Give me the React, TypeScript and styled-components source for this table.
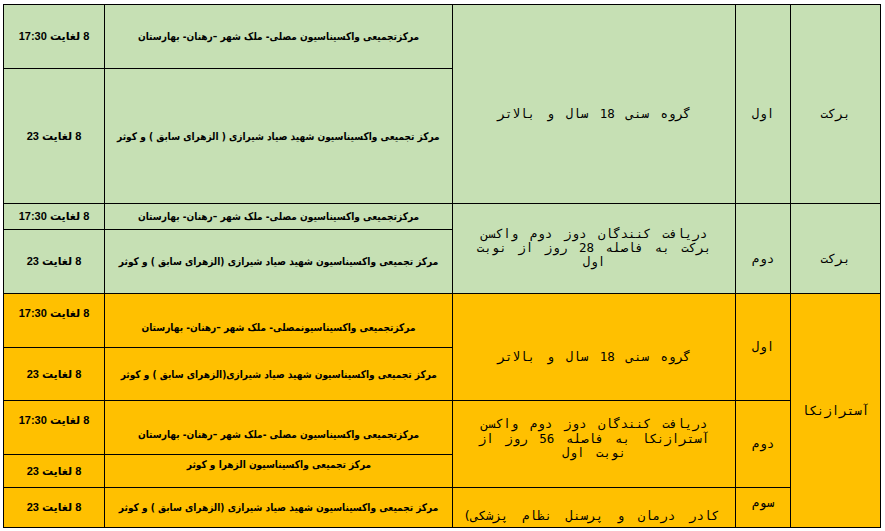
import React from "react";
import styled, { createGlobalStyle } from "styled-components";

const Global = createGlobalStyle`
  html, body { margin: 0; padding: 0; background: #fff; }
  body { font-family: "DejaVu Sans", sans-serif; }
`;

const GREEN = "#C6E0B4";
const YELLOW = "#FFC000";

const Table = styled.div`
  display: grid;
  grid-template-columns: 100px 347px 282px 54px 89px;
  grid-template-rows: 63px 134px 25px 63px 53px 52px 53px 32px 39px;
  gap: 1px;
  padding: 1px;
  background: #000;
  margin: 4px 0 0 3px;
  width: max-content;
  direction: ltr;
`;

type V = "start" | "center" | "end";

const Cell = styled.div<{
  $col: number;
  $row: number;
  $span?: number;
  $bg: string;
  $v?: V;
  $pad?: string;
}>`
  grid-column: ${(p) => p.$col};
  grid-row: ${(p) => p.$row} / span ${(p) => p.$span ?? 1};
  background: ${(p) => p.$bg};
  display: flex;
  flex-direction: column;
  justify-content: ${(p) => p.$v ?? "center"};
  align-items: center;
  padding: ${(p) => p.$pad ?? "0"};
  overflow: hidden;
  direction: rtl;
  color: #000;
  min-width: 0;
`;

const Time = styled.span`
  font-family: "Liberation Sans", "DejaVu Sans", sans-serif;
  font-weight: bold;
  font-size: 11px;
  white-space: nowrap;
  line-height: 13px;
`;

const Place = styled.span`
  display: inline-block;
  font-family: "DejaVu Sans", sans-serif;
  font-weight: bold;
  font-size: 10.4px;
  white-space: nowrap;
  line-height: 13px;
  transform: scaleX(0.87);
`;

const Mono = styled.span<{ $w?: number; $align?: string; $lh?: number; $ws?: number }>`
  font-family: "DejaVu Sans Mono", "DejaVu Sans", monospace;
  font-size: 12.5px;
  line-height: ${(p) => p.$lh ?? 14}px;
  word-spacing: ${(p) => p.$ws ?? 4}px;
  text-align: ${(p) => p.$align ?? "center"};
  ${(p) => (p.$w ? `width: ${p.$w}px;` : "white-space: nowrap;")}
  align-self: ${(p) => (p.$align === "right" ? "flex-start" : "center")};
`;

const T1730 = "8 لغایت 17:30";
const T23 = "8 لغایت 23";

export default function App() {
  return (
    <>
      <Global />
      <Table>
        {/* Barekat, first dose */}
        <Cell $col={1} $row={1} $bg={GREEN}><Time>{T1730}</Time></Cell>
        <Cell $col={2} $row={1} $bg={GREEN}>
          <Place>مرکزتجمیعی واکسیناسیون مصلی- ملک شهر –رهنان- بهارستان</Place>
        </Cell>
        <Cell $col={1} $row={2} $bg={GREEN}><Time>{T23}</Time></Cell>
        <Cell $col={2} $row={2} $bg={GREEN}>
          <Place>مرکز تجمیعی واکسیناسیون شهید صیاد شیرازی ( الزهرای سابق ) و کوثر</Place>
        </Cell>
        <Cell $col={3} $row={1} $span={2} $bg={GREEN} $pad="20px 0 0">
          <Mono>گروه سنی 18 سال و بالاتر</Mono>
        </Cell>
        <Cell $col={4} $row={1} $span={2} $bg={GREEN} $pad="20px 0 0"><Mono>اول</Mono></Cell>
        <Cell $col={5} $row={1} $span={2} $bg={GREEN} $pad="20px 0 0"><Mono>برکت</Mono></Cell>

        {/* Barekat, second dose */}
        <Cell $col={1} $row={3} $bg={GREEN}><Time>{T1730}</Time></Cell>
        <Cell $col={2} $row={3} $bg={GREEN}>
          <Place>مرکزتجمیعی واکسیناسیون مصلی- ملک شهر –رهنان- بهارستان</Place>
        </Cell>
        <Cell $col={1} $row={4} $bg={GREEN}><Time>{T23}</Time></Cell>
        <Cell $col={2} $row={4} $bg={GREEN}>
          <Place>مرکز تجمیعی واکسیناسیون شهید صیاد شیرازی (الزهرای سابق ) و کوثر</Place>
        </Cell>
        <Cell $col={3} $row={3} $span={2} $bg={GREEN} $pad="0 0 1px">
          <Mono $w={250} $lh={14}>دریافت کنندگان دوز دوم واکسن برکت به فاصله 28 روز از نوبت اول</Mono>
        </Cell>
        <Cell $col={4} $row={3} $span={2} $bg={GREEN} $pad="20px 0 0"><Mono>دوم</Mono></Cell>
        <Cell $col={5} $row={3} $span={2} $bg={GREEN} $pad="20px 0 0"><Mono>برکت</Mono></Cell>

        {/* AstraZeneca */}
        <Cell $col={1} $row={5} $bg={YELLOW} $v="start" $pad="13px 0 0"><Time>{T1730}</Time></Cell>
        <Cell $col={2} $row={5} $bg={YELLOW} $v="end" $pad="0 0 13px">
          <Place>مرکزتجمیعی واکسیناسیونمصلی- ملک شهر –رهنان- بهارستان</Place>
        </Cell>
        <Cell $col={1} $row={6} $bg={YELLOW}><Time>{T23}</Time></Cell>
        <Cell $col={2} $row={6} $bg={YELLOW}>
          <Place>مرکز تجمیعی واکسیناسیون شهید صیاد شیرازی(الزهرای سابق ) و کوثر</Place>
        </Cell>
        <Cell $col={3} $row={5} $span={2} $bg={YELLOW} $pad="20px 0 0">
          <Mono>گروه سنی 18 سال و بالاتر</Mono>
        </Cell>
        <Cell $col={4} $row={5} $span={2} $bg={YELLOW}><Mono>اول</Mono></Cell>
        <Cell $col={5} $row={5} $span={5} $bg={YELLOW}><Mono>آسترازنکا</Mono></Cell>

        <Cell $col={1} $row={7} $bg={YELLOW} $v="start" $pad="13px 0 0"><Time>{T1730}</Time></Cell>
        <Cell $col={2} $row={7} $bg={YELLOW} $v="end" $pad="0 0 13px">
          <Place>مرکزتجمیعی واکسیناسیون مصلی -ملک شهر –رهنان- بهارستان</Place>
        </Cell>
        <Cell $col={1} $row={8} $bg={YELLOW}><Time>{T23}</Time></Cell>
        <Cell $col={2} $row={8} $bg={YELLOW} $v="start" $pad="3px 0 0">
          <Place>مرکز تجمیعی واکسیناسیون الزهرا و کوثر</Place>
        </Cell>
        <Cell $col={3} $row={7} $span={2} $bg={YELLOW} $pad="0 0 10px">
          <Mono $w={250} $lh={14.5}>دریافت کنندگان دوز دوم واکسن آسترازنکا به فاصله 56 روز از نوبت اول</Mono>
        </Cell>
        <Cell $col={4} $row={7} $span={2} $bg={YELLOW}><Mono>دوم</Mono></Cell>

        <Cell $col={1} $row={9} $bg={YELLOW}><Time>{T23}</Time></Cell>
        <Cell $col={2} $row={9} $bg={YELLOW}>
          <Place>مرکز تجمیعی واکسیناسیون شهید صیاد شیرازی (الزهرای سابق ) و کوثر</Place>
        </Cell>
        <Cell $col={3} $row={9} $bg={YELLOW} $v="end" $pad="0 16px 4px 0">
          <Mono $align="right" $ws={6}>کادر درمان و پرسنل نظام پزشکی)</Mono>
        </Cell>
        <Cell $col={4} $row={9} $bg={YELLOW} $v="start" $pad="8px 0 0"><Mono>سوم</Mono></Cell>
      </Table>
    </>
  );
}
